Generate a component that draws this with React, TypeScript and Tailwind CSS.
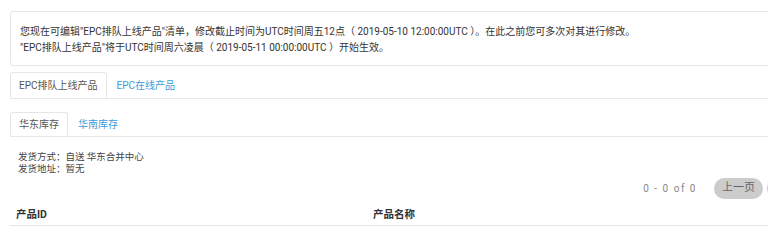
const font = { fontFamily: '"Roboto", "Noto Sans CJK SC", sans-serif' };

const App = () => {
  return (
    <div className="w-[768px] h-[229px] overflow-hidden bg-white" style={font}>
      <div className="w-[840px] ml-[10px] pt-[11px]">
        {/* notice */}
        <div className="h-[55px] border border-[#e6e6e6] rounded-[3px] px-[9px] pt-[12px] text-[10px] leading-[16px] text-[#333]">
          <p>您现在可编辑"EPC排队上线产品"清单，修改截止时间为UTC时间周五12点（ 2019-05-10 12:00:00UTC ）。在此之前您可多次对其进行修改。</p>
          <p>"EPC排队上线产品"将于UTC时间周六凌晨（ 2019-05-11 00:00:00UTC ）开始生效。</p>
        </div>

        {/* main tabs */}
        <div className="mt-[6px] flex border-b border-[#e6e6e6] text-[10px]">
          <div className="h-[26px] -mb-px px-[8px] flex items-center border border-[#e6e6e6] border-b-white rounded-t-[3px] bg-white text-[#555]">
            EPC排队上线产品
          </div>
          <div className="h-[26px] px-[10px] flex items-center text-[#3d9bd8]">EPC在线产品</div>
        </div>

        {/* sub tabs */}
        <div className="mt-[13px] flex border-b border-[#e6e6e6] text-[10px]">
          <div className="h-[24px] -mb-px px-[8px] flex items-center border border-[#e6e6e6] border-b-white rounded-t-[3px] bg-white text-[#555]">
            华东库存
          </div>
          <div className="h-[24px] px-[10px] flex items-center text-[#3d9bd8]">华南库存</div>
        </div>

        {/* delivery info */}
        <div className="mt-[14px] pl-[8px] text-[9.5px] leading-[12px] text-[#444]">
          <p>发货方式：自送 华东合并中心</p>
          <p>发货地址：暂无</p>
        </div>

        {/* pagination */}
        <div className="mt-[3px] flex items-center justify-end pr-[34px] text-[10px]">
          <span className="text-[#888] tracking-[1.5px] mr-[17px]">0 - 0 of 0</span>
          <button className="w-[49px] h-[21px] rounded-full bg-[#cccccc] text-[#666] text-[11px]">上一页</button>
          <button className="ml-[4px] w-[49px] h-[21px] rounded-full bg-[#cccccc] text-[#666] text-[11px]">下一页</button>
        </div>

        {/* table header */}
        <div className="grid grid-cols-[357px_1fr] pl-[6px] pt-[9px] pb-[4px] border-b border-[#e6e6e6] text-[10.5px] font-bold text-[#333] leading-[13px]">
          <span>产品ID</span>
          <span>产品名称</span>
        </div>
      </div>
    </div>
  );
};

export default App;
